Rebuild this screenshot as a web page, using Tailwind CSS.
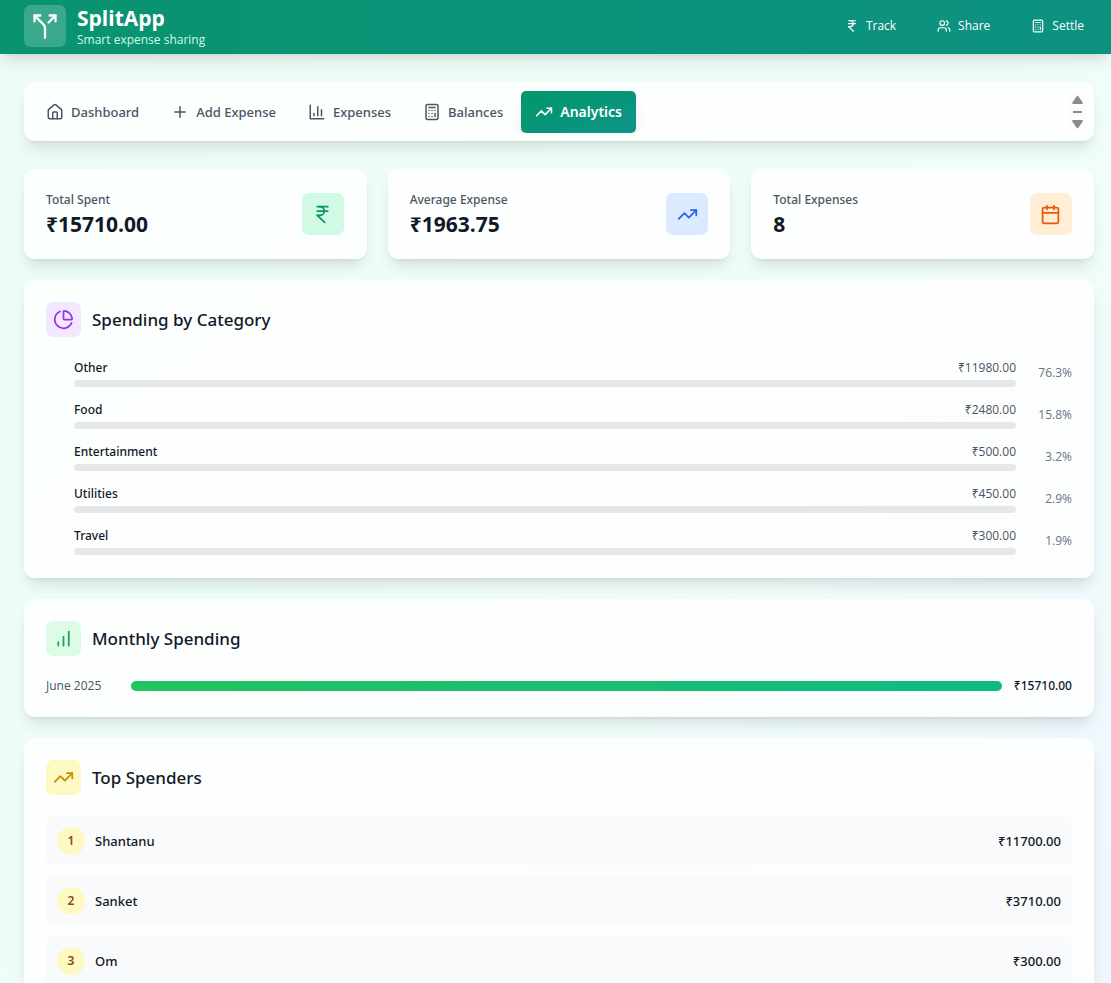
<!DOCTYPE html>
<html lang="en">
<head>
<meta charset="utf-8">
<meta name="viewport" content="width=device-width, initial-scale=1">
<title>SplitApp – Analytics</title>
<script src="https://cdn.jsdelivr.net/npm/@tailwindcss/browser@4"></script>
</head>
<body class="min-h-screen bg-linear-to-br from-[#ecfdf5] via-[#f0fdfa] via-60% to-[#eff6ff] font-['Open_Sans','Noto_Sans',sans-serif] text-[#111827]">

<!-- Icon symbols -->
<svg class="hidden" aria-hidden="true">
  <symbol id="split" viewBox="0 0 24 24"><path d="M16 3h5v5"/><path d="M8 3H3v5"/><path d="M12 22v-8.3a4 4 0 0 0-1.172-2.872L3 3"/><path d="m15 9 6-6"/></symbol>
  <symbol id="rupee" viewBox="0 0 24 24"><path d="M6 3h12"/><path d="M6 8h12"/><path d="m6 13 8.500 8"/><path d="M6 13h3"/><path d="M9 13c6.667 0 6.667-10 0-10"/></symbol>
  <symbol id="users" viewBox="0 0 24 24"><path d="M16 21v-2a4 4 0 0 0-4-4H6a4 4 0 0 0-4 4v2"/><circle cx="9" cy="7" r="4"/><path d="M22 21v-2a4 4 0 0 0-3-3.870"/><path d="M16 3.130a4 4 0 0 1 0 7.750"/></symbol>
  <symbol id="calculator" viewBox="0 0 24 24"><rect width="16" height="20" x="4" y="2" rx="2"/><path d="M8 6h8"/><path d="M16 14v4"/><path d="M16 10h.01"/><path d="M12 10h.01"/><path d="M8 10h.01"/><path d="M12 14h.01"/><path d="M8 14h.01"/><path d="M12 18h.01"/><path d="M8 18h.01"/></symbol>
  <symbol id="house" viewBox="0 0 24 24"><path d="M15 21v-8a1 1 0 0 0-1-1h-4a1 1 0 0 0-1 1v8"/><path d="M3 10a2 2 0 0 1 .709-1.528l7-5.999a2 2 0 0 1 2.582 0l7 5.999A2 2 0 0 1 21 10v9a2 2 0 0 1-2 2H5a2 2 0 0 1-2-2z"/></symbol>
  <symbol id="plus" viewBox="0 0 24 24"><path d="M5 12h14"/><path d="M12 5v14"/></symbol>
  <symbol id="chart" viewBox="0 0 24 24"><path d="M3 3v18h18"/><path d="M18 17V9"/><path d="M13 17V5"/><path d="M8 17v-3"/></symbol>
  <symbol id="trend" viewBox="0 0 24 24"><path d="m22 7-8.500 8.500-5-5L2 17"/><path d="M16 7h6v6"/></symbol>
  <symbol id="calendar" viewBox="0 0 24 24"><path d="M8 2v4"/><path d="M16 2v4"/><rect width="18" height="18" x="3" y="4" rx="2"/><path d="M3 10h18"/></symbol>
  <symbol id="pie" viewBox="0 0 24 24"><path d="M21 12c.552 0 1.005-.449.950-.998a10 10 0 0 0-8.953-8.951c-.550-.055-.998.398-.998.950v8a1 1 0 0 0 1 1z"/><path d="M21.210 15.890A10 10 0 1 1 8 2.830"/></symbol>
  <symbol id="bars" viewBox="0 0 24 24"><path d="M12 20V10"/><path d="M18 20V4"/><path d="M6 20v-4"/></symbol>
</svg>

<header class="flex h-[54px] items-center justify-between bg-linear-to-r from-[#09936f] to-[#0d9282] pr-[17px] pb-[2px] pl-6 text-white shadow-lg">
  <div class="flex items-center gap-[11px]">
    <div class="flex size-[42px] items-center justify-center rounded-[7px] bg-white/20">
      <svg class="size-7 fill-none stroke-current stroke-2 [stroke-linecap:round] [stroke-linejoin:round]"><use href="#split"/></svg>
    </div>
    <div class="pt-[2px]">
      <h1 class="text-[21px] leading-[26px] font-bold">SplitApp</h1>
      <p class="text-[12px] leading-[18px] text-[#d1fae5]">Smart expense sharing</p>
    </div>
  </div>
  <nav class="flex gap-[21px] text-[12px] leading-[18px]" aria-label="Shortcuts">
    <a href="#track" class="flex items-center gap-[7px] px-[10px]"><svg class="size-[14px] fill-none stroke-current stroke-2 [stroke-linecap:round] [stroke-linejoin:round]"><use href="#rupee"/></svg>Track</a>
    <a href="#share" class="flex items-center gap-[7px] px-[10px]"><svg class="size-[14px] fill-none stroke-current stroke-2 [stroke-linecap:round] [stroke-linejoin:round]"><use href="#users"/></svg>Share</a>
    <a href="#settle" class="flex items-center gap-[7px] px-[10px]"><svg class="size-[14px] fill-none stroke-current stroke-2 [stroke-linecap:round] [stroke-linejoin:round]"><use href="#calculator"/></svg>Settle</a>
  </nav>
</header>

<main class="flex flex-col gap-[21px] pt-7 pr-[17px] pb-7 pl-6">

  <div class="mb-[7px] flex items-center justify-between rounded-[11px] bg-white/80 p-2 shadow-lg">
    <nav class="flex h-[43px] grow items-start gap-1 overflow-hidden pt-px font-['Noto_Sans',sans-serif] text-[13px] leading-5 font-medium text-[#4b5563]" aria-label="Sections">
      <button class="flex h-[42px] items-center gap-[7px] px-[14px]"><svg class="size-[18px] fill-none stroke-current stroke-2 [stroke-linecap:round] [stroke-linejoin:round]"><use href="#house"/></svg>Dashboard</button>
      <button class="flex h-[42px] items-center gap-[7px] px-[14px]"><svg class="size-[18px] fill-none stroke-current stroke-2 [stroke-linecap:round] [stroke-linejoin:round]"><use href="#plus"/></svg>Add Expense</button>
      <button class="flex h-[42px] items-center gap-[7px] px-[14px]"><svg class="size-[18px] fill-none stroke-current stroke-2 [stroke-linecap:round] [stroke-linejoin:round]"><use href="#chart"/></svg>Expenses</button>
      <button class="flex h-[42px] items-center gap-[7px] px-[14px]"><svg class="size-[18px] fill-none stroke-current stroke-2 [stroke-linecap:round] [stroke-linejoin:round]"><use href="#calculator"/></svg>Balances</button>
      <button class="flex h-[42px] items-center gap-[7px] rounded-[5px] bg-linear-to-br from-[#059669] to-[#0d9488] px-[14px] text-[14px] font-semibold text-white shadow-lg" aria-current="page"><svg class="size-[18px] fill-none stroke-current stroke-2 [stroke-linecap:round] [stroke-linejoin:round]"><use href="#trend"/></svg>Analytics</button>
    </nav>
    <div class="flex h-[42px] w-[17px] flex-col items-center justify-between bg-[#fcfcfc] py-[5px] text-[#8b8b8b]">
      <button aria-label="Scroll up"><svg class="h-2 w-[11px] fill-current" viewBox="0 0 11 8"><path d="M5.500 0 Q6 0 6.500 .6 L10.700 6.600 Q11 8 10 8 H1 Q0 8 .3 6.600 L4.500 .6 Q5 0 5.500 0Z"/></svg></button>
      <span class="h-[2px] w-[9px] bg-[#8b8b8b]"></span>
      <button aria-label="Scroll down"><svg class="h-2 w-[11px] fill-current" viewBox="0 0 11 8"><path d="M5.500 8 Q6 8 6.500 7.400 L10.700 1.400 Q11 0 10 0 H1 Q0 0 .3 1.400 L4.500 7.400 Q5 8 5.500 8Z"/></svg></button>
    </div>
  </div>

  <section class="grid grid-cols-3 gap-[21px]" aria-label="Summary">
    <div class="flex h-[90px] items-center justify-between rounded-[11px] bg-white/80 px-[22px] pr-[23px] shadow-lg">
      <div class="pt-[2px]"><p class="font-['Noto_Sans',sans-serif] text-[12px] leading-[18px] font-medium text-[#4b5563]">Total Spent</p><p class="text-[21px] leading-[30px] font-bold">₹15710.00</p></div>
      <div class="flex size-[42px] items-center justify-center rounded-[7px] bg-[#d1fae5] text-[#059669]"><svg class="size-[21px] fill-none stroke-current stroke-2 [stroke-linecap:round] [stroke-linejoin:round]"><use href="#rupee"/></svg></div>
    </div>
    <div class="flex h-[90px] items-center justify-between rounded-[11px] bg-white/80 px-[22px] shadow-lg">
      <div class="pt-[2px]"><p class="font-['Noto_Sans',sans-serif] text-[12px] leading-[18px] font-medium text-[#4b5563]">Average Expense</p><p class="text-[21px] leading-[30px] font-bold">₹1963.75</p></div>
      <div class="flex size-[42px] items-center justify-center rounded-[7px] bg-[#dbeafe] text-[#2563eb]"><svg class="size-[21px] fill-none stroke-current stroke-2 [stroke-linecap:round] [stroke-linejoin:round]"><use href="#trend"/></svg></div>
    </div>
    <div class="flex h-[90px] items-center justify-between rounded-[11px] bg-white/80 px-[22px] shadow-lg">
      <div class="pt-[2px]"><p class="font-['Noto_Sans',sans-serif] text-[12px] leading-[18px] font-medium text-[#4b5563]">Total Expenses</p><p class="text-[21px] leading-[30px] font-bold">8</p></div>
      <div class="flex size-[42px] items-center justify-center rounded-[7px] bg-[#ffedd5] text-[#ea580c]"><svg class="size-[21px] fill-none stroke-current stroke-2 [stroke-linecap:round] [stroke-linejoin:round]"><use href="#calendar"/></svg></div>
    </div>
  </section>

  <section class="rounded-[11px] bg-white/80 p-[22px] pb-[23px] shadow-lg">
    <div class="mb-[22px] flex items-center gap-[11px]">
      <div class="flex size-[35px] items-center justify-center rounded-[7px] bg-[#f3e8ff] text-[#9333ea]"><svg class="size-[21px] fill-none stroke-current stroke-2 [stroke-linecap:round] [stroke-linejoin:round]"><use href="#pie"/></svg></div>
      <h2 class="font-['Noto_Sans',sans-serif] text-[17px] leading-6 font-medium">Spending by Category</h2>
    </div>
    <ul class="flex flex-col gap-[14px] pl-7 text-[12px] leading-[18px]">
      <li class="flex items-center gap-[14px]"><div class="flex grow flex-col gap-[3px]"><div class="flex justify-between"><span class="font-['Noto_Sans',sans-serif] font-medium">Other</span><span class="text-[#4b5563]">₹11980.00</span></div><div class="h-[7px] rounded-full bg-[#e5e7eb]"></div></div><span class="w-[42px] text-right text-[#6b7280]">76.3%</span></li>
      <li class="flex items-center gap-[14px]"><div class="flex grow flex-col gap-[3px]"><div class="flex justify-between"><span class="font-['Noto_Sans',sans-serif] font-medium">Food</span><span class="text-[#4b5563]">₹2480.00</span></div><div class="h-[7px] rounded-full bg-[#e5e7eb]"></div></div><span class="w-[42px] text-right text-[#6b7280]">15.8%</span></li>
      <li class="flex items-center gap-[14px]"><div class="flex grow flex-col gap-[3px]"><div class="flex justify-between"><span class="font-['Noto_Sans',sans-serif] font-medium">Entertainment</span><span class="text-[#4b5563]">₹500.00</span></div><div class="h-[7px] rounded-full bg-[#e5e7eb]"></div></div><span class="w-[42px] text-right text-[#6b7280]">3.2%</span></li>
      <li class="flex items-center gap-[14px]"><div class="flex grow flex-col gap-[3px]"><div class="flex justify-between"><span class="font-['Noto_Sans',sans-serif] font-medium">Utilities</span><span class="text-[#4b5563]">₹450.00</span></div><div class="h-[7px] rounded-full bg-[#e5e7eb]"></div></div><span class="w-[42px] text-right text-[#6b7280]">2.9%</span></li>
      <li class="flex items-center gap-[14px]"><div class="flex grow flex-col gap-[3px]"><div class="flex justify-between"><span class="font-['Noto_Sans',sans-serif] font-medium">Travel</span><span class="text-[#4b5563]">₹300.00</span></div><div class="h-[7px] rounded-full bg-[#e5e7eb]"></div></div><span class="w-[42px] text-right text-[#6b7280]">1.9%</span></li>
    </ul>
  </section>

  <section class="rounded-[11px] bg-white/80 p-[22px] shadow-lg">
    <div class="mb-[21px] flex items-center gap-[11px]">
      <div class="flex size-[35px] items-center justify-center rounded-[7px] bg-[#dcfce7] text-[#16a34a]"><svg class="size-[21px] fill-none stroke-current stroke-2 [stroke-linecap:round] [stroke-linejoin:round]"><use href="#bars"/></svg></div>
      <h2 class="font-['Noto_Sans',sans-serif] text-[17px] leading-6 font-medium">Monthly Spending</h2>
    </div>
    <div class="flex items-center text-[12px] leading-[18px]">
      <span class="w-[85px] text-[#4b5563]">June 2025</span>
      <div class="h-[10px] grow rounded-full bg-linear-to-r from-[#22c55e] to-[#10b981]"></div>
      <span class="w-[70px] text-right font-['Noto_Sans',sans-serif] font-medium">₹15710.00</span>
    </div>
  </section>

  <section class="rounded-[11px] bg-white/80 p-[22px] shadow-lg">
    <div class="mb-[21px] flex items-center gap-[11px]">
      <div class="flex size-[35px] items-center justify-center rounded-[7px] bg-[#fef9c3] text-[#ca8a04]"><svg class="size-[21px] fill-none stroke-current stroke-2 [stroke-linecap:round] [stroke-linejoin:round]"><use href="#trend"/></svg></div>
      <h2 class="font-['Noto_Sans',sans-serif] text-[17px] leading-6 font-medium">Top Spenders</h2>
    </div>
    <ol class="flex flex-col gap-[11px] font-['Noto_Sans',sans-serif] text-[13px] leading-5">
      <li class="flex h-[49px] items-center gap-[10px] rounded-[7px] bg-[#f9fafb] px-[11px]"><span class="flex size-7 items-center justify-center rounded-full bg-[#fef9c3] text-[12px] font-semibold text-[#854d0e]">1</span><span class="grow font-medium">Shantanu</span><span class="font-medium">₹11700.00</span></li>
      <li class="flex h-[49px] items-center gap-[10px] rounded-[7px] bg-[#f9fafb] px-[11px]"><span class="flex size-7 items-center justify-center rounded-full bg-[#fef9c3] text-[12px] font-semibold text-[#854d0e]">2</span><span class="grow font-medium">Sanket</span><span class="font-medium">₹3710.00</span></li>
      <li class="flex h-[49px] items-center gap-[10px] rounded-[7px] bg-[#f9fafb] px-[11px]"><span class="flex size-7 items-center justify-center rounded-full bg-[#fef9c3] text-[12px] font-semibold text-[#854d0e]">3</span><span class="grow font-medium">Om</span><span class="font-medium">₹300.00</span></li>
    </ol>
  </section>
</main>
</body>
</html>
